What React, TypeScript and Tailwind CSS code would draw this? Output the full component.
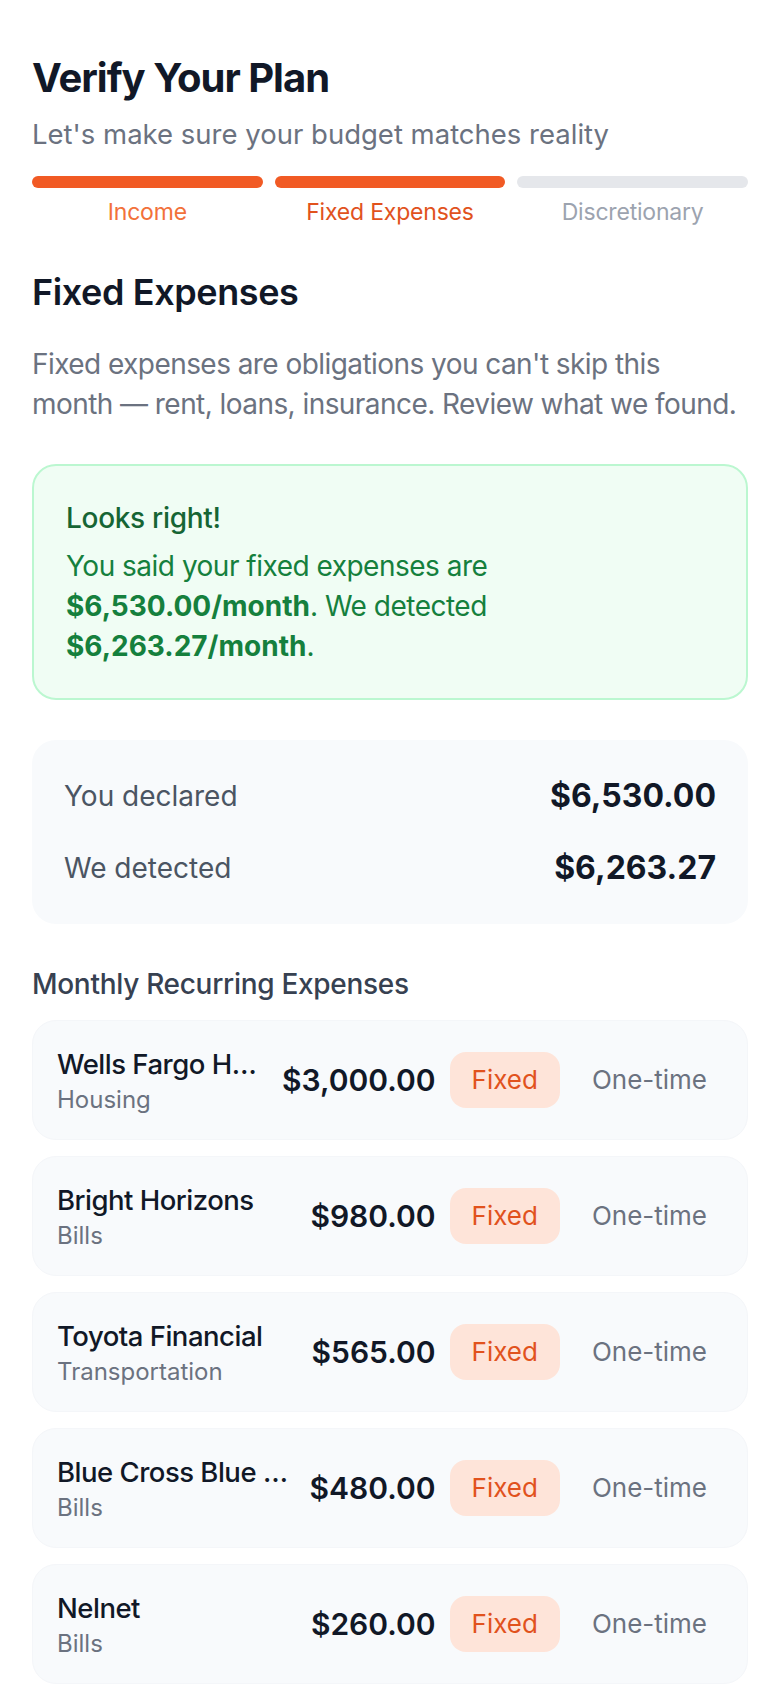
import React from 'react';

const expenses = [
  { name: 'Wells Fargo Home Mortgage', category: 'Housing', amount: '$3,000.00' },
  { name: 'Bright Horizons', category: 'Bills', amount: '$980.00' },
  { name: 'Toyota Financial', category: 'Transportation', amount: '$565.00' },
  { name: 'Blue Cross Blue Shield', category: 'Bills', amount: '$480.00' },
  { name: 'Nelnet', category: 'Bills', amount: '$260.00' }
];

const steps = [
  { label: 'Income', bar: 'bg-[#f15a24]', text: 'text-[#f2713a]' },
  { label: 'Fixed Expenses', bar: 'bg-[#f15a24]', text: 'text-[#e1521d]' },
  { label: 'Discretionary', bar: 'bg-[#e5e7eb]', text: 'text-[#9ca3af]' }
];

function ExpenseRow({ e }: { e: (typeof expenses)[number] }) {
  return (
    <div className="flex items-center rounded-3xl border border-[#f4f6f9] bg-[#f8fafc] px-6 py-[23px]">
      <div className="min-w-0 flex-1">
        <p className="truncate text-[27.5px] leading-10 font-medium tracking-[-0.5px] text-[#111827]">{e.name}</p>
        <p className="text-[24px] leading-8 text-[#6b7280]">{e.category}</p>
      </div>
      <span className="ml-2.5 text-[30px] leading-10 font-semibold text-[#111827]">{e.amount}</span>
      <span className="ml-3.5 rounded-2xl bg-[#fee4d9] px-[22px] py-2 text-[26px] leading-10 text-[#e1521d]">
        Fixed
      </span>
      <span className="ml-4 px-4 py-2 text-[26px] leading-10 text-[#6b7280]">One-time</span>
    </div>);

}

export default function App() {
  return (
    <div
      className="min-h-screen bg-white px-8 pt-[50px] pb-8 text-[#111827]"
      style={{ fontFamily: 'Inter, "Noto Sans", sans-serif' }}>
      
      <h1 className="text-[40px] leading-[56px] font-bold tracking-tight text-[#111827]">Verify Your Plan</h1>
      <p className="mt-2.5 text-[27.5px] leading-9 text-[#6b7280]">Let's make sure your budget matches reality</p>

      {/* Step indicator */}
      <div className="mt-6 grid grid-cols-3 gap-3">
        {steps.map((s) =>
        <div key={s.label} className="flex flex-col items-center">
            <div className={`h-3 w-full rounded-full ${s.bar}`} />
            <span className={`mt-2 text-[23px] leading-8 tracking-[-0.2px] ${s.text}`}>{s.label}</span>
          </div>
        )}
      </div>

      <h2 className="mt-10 text-[36px] leading-[48px] font-semibold tracking-[-0.4px] text-[#111827]">Fixed Expenses</h2>
      <p className="mt-7 text-[28px] leading-10 tracking-[-0.56px] text-[#6b7280]">
        Fixed expenses are obligations you can't skip this month — rent, loans, insurance. Review what we found.
      </p>

      {/* Verdict */}
      <div className="mt-10 rounded-3xl border-2 border-[#bbf7d0] bg-[#f0fdf4] p-8">
        <p className="text-[28px] leading-10 font-medium tracking-[-0.3px] text-[#166534]">Looks right!</p>
        <p className="mt-2 text-[28px] leading-10 tracking-[-0.5px] text-[#15803d]">
          You said your fixed expenses are <span className="font-bold tracking-normal">$6,530.00/month</span>. We detected{' '}
          <span className="font-bold tracking-normal">$6,263.27/month</span>.
        </p>
      </div>

      {/* Totals */}
      <div className="mt-10 space-y-6 rounded-3xl bg-[#f8fafc] px-8 py-8">
        <div className="flex items-center justify-between">
          <span className="text-[28px] leading-10 text-[#4b5563]">You declared</span>
          <span className="text-[32px] leading-[48px] font-bold text-[#111827]">$6,530.00</span>
        </div>
        <div className="flex items-center justify-between">
          <span className="text-[28px] leading-10 text-[#4b5563]">We detected</span>
          <span className="text-[32px] leading-[48px] font-bold text-[#111827]">$6,263.27</span>
        </div>
      </div>

      <h3 className="mt-10 text-[28px] leading-10 font-medium tracking-[-0.3px] text-[#374151]">Monthly Recurring Expenses</h3>
      <div className="mt-4 space-y-4">
        {expenses.map((e) =>
        <ExpenseRow key={e.name} e={e} />
        )}
      </div>
    </div>);

}
